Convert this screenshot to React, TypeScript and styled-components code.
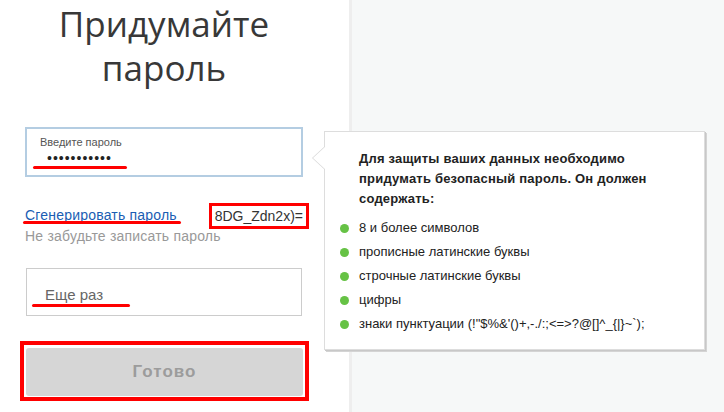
import React from "react";
import styled, { createGlobalStyle } from "styled-components";

const Global = createGlobalStyle`
  html, body { margin: 0; padding: 0; }
  body { background: #ffffff; font-family: "Liberation Sans", Arial, sans-serif; }
  * { box-sizing: border-box; }
`;

const Page = styled.div`
  position: relative;
  display: flex;
  width: 724px;
  height: 412px;
  overflow: hidden;
`;

const LeftPanel = styled.div`
  width: 349px;
  flex: none;
  background: #ffffff;
  padding-left: 25px;
`;

const RightPanel = styled.div`
  flex: 1;
  background: #f6f8f8;
  border-left: 3px solid #eeeeee;
`;

const Column = styled.div`
  width: 278px;
  display: flex;
  flex-direction: column;
`;

const Title = styled.h1`
  margin: 0;
  padding-top: 2px;
  font-family: "Open Sans", sans-serif;
  font-weight: 400;
  font-size: 35px;
  line-height: 44px;
  color: #383838;
  text-align: center;
`;

const Field = styled.div<{ $focused?: boolean }>`
  position: relative;
  height: ${(p) => (p.$focused ? "50px" : "48px")};
  border: ${(p) => (p.$focused ? "2px solid #b4cde2" : "1px solid #cccccc")};
  background: #fff;
  display: flex;
  flex-direction: column;
  justify-content: center;
`;

const FieldLabel = styled.div`
  font-size: 11px;
  color: #555;
  padding-left: 13px;
  margin-top: -4px;
`;

const Dots = styled.div`
  font-size: 14px;
  color: #222;
  letter-spacing: 1px;
  padding-left: 20px;
  margin-top: 4px;
  line-height: 12px;
`;

const Placeholder = styled.div`
  font-size: 15px;
  color: #666;
  padding-left: 18px;
  margin-top: 4px;
`;

const Mark = styled.span<{ $left: number; $top: number; $width: number }>`
  position: absolute;
  left: ${(p) => p.$left}px;
  top: ${(p) => p.$top}px;
  width: ${(p) => p.$width}px;
  height: 3px;
  border-radius: 2px;
  background: #ff0000;
`;

const GenRow = styled.div`
  position: relative;
  display: flex;
  justify-content: space-between;
  align-items: center;
  margin-top: 26px;
  margin-right: -6px;
`;

const GenLink = styled.a`
  font-size: 14px;
  color: #1a5db3;
  text-decoration: none;
  border-bottom: 1px dashed #1a5db3;
  line-height: 15px;
  letter-spacing: 0.2px;
  cursor: pointer;
`;

const GenValue = styled.span`
  font-size: 14px;
  color: #333;
  border: 3px solid #ff0000;
  padding: 2px 3px 2px 3px;
  line-height: 16px;
`;

const Hint = styled.div`
  font-size: 14px;
  color: #999;
  letter-spacing: 0.2px;
  margin-top: -1px;
`;

const SecondField = styled(Field)`
  margin-top: 24px;
  margin-left: 1px;
  margin-right: 1px;
`;

const ButtonFrame = styled.div`
  margin-top: 25px;
  margin-left: -5px;
  margin-right: -6px;
  border: 4px solid #ff0000;
  padding: 3px 2px 1px 2px;
`;

const Button = styled.button`
  width: 100%;
  height: 48px;
  border: none;
  border-radius: 3px;
  background: #d6d6d6;
  color: #9c9c9c;
  font-family: "Liberation Sans", Arial, sans-serif;
  font-weight: 700;
  font-size: 17px;
  letter-spacing: 1px;
  padding: 0;
  cursor: default;
`;

const Tip = styled.div`
  position: absolute;
  left: 324px;
  top: 131px;
  width: 381px;
  height: 219px;
  background: #fff;
  border: 1px solid #dddddd;
  box-shadow: 1px 1px 0 #c8c8c8, 2px 2px 0 #d4d4d4;
  padding: 17px 20px 0 34px;
  &::before,
  &::after {
    content: "";
    position: absolute;
    top: 14px;
    border-style: solid;
    border-color: transparent;
  }
  &::before {
    left: -13px;
    border-width: 12px 13px 12px 0;
    border-right-color: #d8d8d8;
  }
  &::after {
    left: -12px;
    border-width: 12px 13px 12px 0;
    border-right-color: #ffffff;
  }
`;

const TipHead = styled.p`
  margin: 0;
  font-size: 13px;
  font-weight: 700;
  line-height: 20px;
  color: #222;
  letter-spacing: 0.2px;
`;

const List = styled.ul`
  list-style: none;
  margin: 10px 0 0 -19px;
  padding: 0;
  display: flex;
  flex-direction: column;
  gap: 6px;
`;

const Item = styled.li`
  display: flex;
  align-items: center;
  gap: 10px;
  font-size: 13px;
  line-height: 18px;
  color: #222;
  letter-spacing: 0;
  &::before {
    content: "";
    width: 9px;
    height: 9px;
    border-radius: 50%;
    background: #66c245;
    flex: none;
  }
`;

const rules = [
  "8 и более символов",
  "прописные латинские буквы",
  "строчные латинские буквы",
  "цифры",
  "знаки пунктуации (!\"$%&'()+,-./:;<=>?@[]^_{|}~`);",
];

export default function App() {
  return (
    <Page>
      <Global />
      <LeftPanel>
        <Column>
          <Title>
            Придумайте
            <br />
            пароль
          </Title>
          <Field $focused style={{ marginTop: 37 }}>
            <FieldLabel>Введите пароль</FieldLabel>
            <Dots>•••••••••••</Dots>
            <Mark $left={6} $top={37} $width={94} />
          </Field>
          <GenRow>
            <GenLink>Сгенерировать пароль</GenLink>
            <GenValue>8DG_Zdn2x)=</GenValue>
            <Mark $left={-2} $top={18} $width={158} />
          </GenRow>
          <Hint>Не забудьте записать пароль</Hint>
          <SecondField>
            <Placeholder>Еще раз</Placeholder>
            <Mark $left={5} $top={35} $width={98} />
          </SecondField>
          <ButtonFrame>
            <Button>Готово</Button>
          </ButtonFrame>
        </Column>
      </LeftPanel>
      <RightPanel />
      <Tip>
        <TipHead>
          Для защиты ваших данных необходимо придумать безопасный пароль. Он
          должен содержать:
        </TipHead>
        <List>
          {rules.map((r) => (
            <Item key={r}>{r}</Item>
          ))}
        </List>
      </Tip>
    </Page>
  );
}
